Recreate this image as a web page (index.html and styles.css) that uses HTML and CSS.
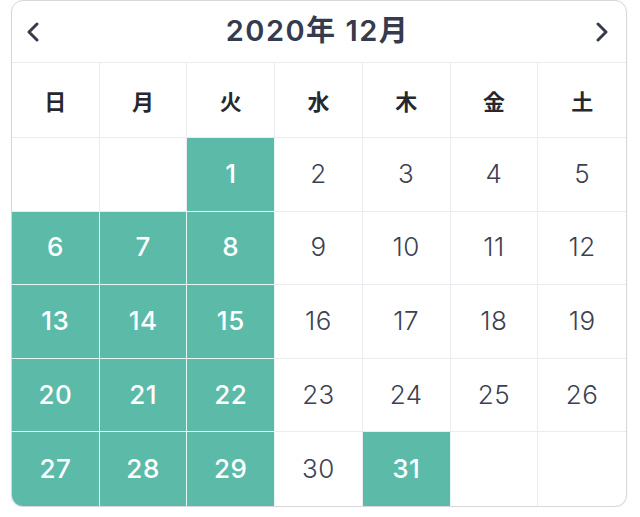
FILE: index.html
```html
<!DOCTYPE html>
<html lang="ja">
<head>
<meta charset="utf-8">
<link rel="stylesheet" href="styles.css">
</head>
<body>
<div class="card">
  <div class="header">
    <button class="nav nav-prev" aria-label="前月">
      <svg width="14" height="20" viewBox="0 0 14 20"><path d="M11 2 L3 10 L11 18" fill="none" stroke="#363c4e" stroke-width="3" stroke-linecap="round" stroke-linejoin="round"/></svg>
    </button>
    <div class="title">2020年 12月</div>
    <button class="nav nav-next" aria-label="次月">
      <svg width="14" height="20" viewBox="0 0 14 20"><path d="M3 2 L11 10 L3 18" fill="none" stroke="#363c4e" stroke-width="3" stroke-linecap="round" stroke-linejoin="round"/></svg>
    </button>
  </div>
  <div class="grid">
    <div class="cell wd">日</div><div class="cell wd">月</div><div class="cell wd">火</div><div class="cell wd">水</div><div class="cell wd">木</div><div class="cell wd">金</div><div class="cell wd last-col">土</div>

    <div class="cell"></div><div class="cell"></div><div class="cell on">1</div><div class="cell">2</div><div class="cell">3</div><div class="cell">4</div><div class="cell last-col">5</div>

    <div class="cell on">6</div><div class="cell on">7</div><div class="cell on">8</div><div class="cell">9</div><div class="cell">10</div><div class="cell">11</div><div class="cell last-col">12</div>

    <div class="cell on">13</div><div class="cell on">14</div><div class="cell on">15</div><div class="cell">16</div><div class="cell">17</div><div class="cell">18</div><div class="cell last-col">19</div>

    <div class="cell on">20</div><div class="cell on">21</div><div class="cell on">22</div><div class="cell">23</div><div class="cell">24</div><div class="cell">25</div><div class="cell last-col">26</div>

    <div class="cell on last-row">27</div><div class="cell on last-row">28</div><div class="cell on last-row">29</div><div class="cell last-row">30</div><div class="cell on last-row">31</div><div class="cell last-row"></div><div class="cell last-row last-col"></div>
  </div>
</div>
</body>
</html>
```

FILE: styles.css
```css
* { box-sizing: border-box; }

html, body {
  margin: 0;
  padding: 0;
  background: #ffffff;
}

body {
  font-family: "Inter", "Noto Sans CJK JP", sans-serif;
  color: #3b4051;
}

.card {
  margin-left: 11px;
  width: 616px;
  height: 507px;
  border: 1px solid #d6d6dc;
  border-radius: 12px;
  overflow: hidden;
  background: #fff;
  display: flex;
  flex-direction: column;
  box-shadow: 0 1px 2px rgba(0,0,0,0.06);
}

.header {
  height: 62px;
  flex: none;
  border-bottom: 1px solid #ececf0;
  display: flex;
  align-items: center;
  justify-content: space-between;
  padding: 0 16px 0 13px;
}

.nav {
  background: none;
  border: none;
  padding: 0;
  width: 16px;
  height: 24px;
  display: flex;
  align-items: center;
  justify-content: center;
  cursor: pointer;
}

.title {
  font-size: 29px;
  font-weight: 600;
  letter-spacing: 1.5px;
  color: #353b4d;
  line-height: 1;
  padding-bottom: 2px;
}

.grid {
  flex: 1;
  display: grid;
  grid-template-columns: repeat(7, 1fr);
  grid-template-rows: 75px repeat(5, 1fr);
}

.cell {
  display: flex;
  align-items: center;
  justify-content: center;
  border-right: 1px solid #ececf0;
  border-bottom: 1px solid #ececf0;
  font-size: 26px;
  font-weight: 300;
  letter-spacing: 0.5px;
  color: #3c4152;
  padding-bottom: 2px;
}

.cell.wd {
  font-family: "Noto Sans CJK JP", sans-serif;
  font-size: 22px;
  font-weight: 700;
  letter-spacing: 0;
  color: #26282e;
  padding-bottom: 0;
}

.cell.last-col { border-right: none; }
.cell.last-row { border-bottom: none; }

.cell.on {
  background: #5cbaa9;
  color: #ffffff;
  font-weight: 500;
  border-color: #e6f6f3;
}
```
